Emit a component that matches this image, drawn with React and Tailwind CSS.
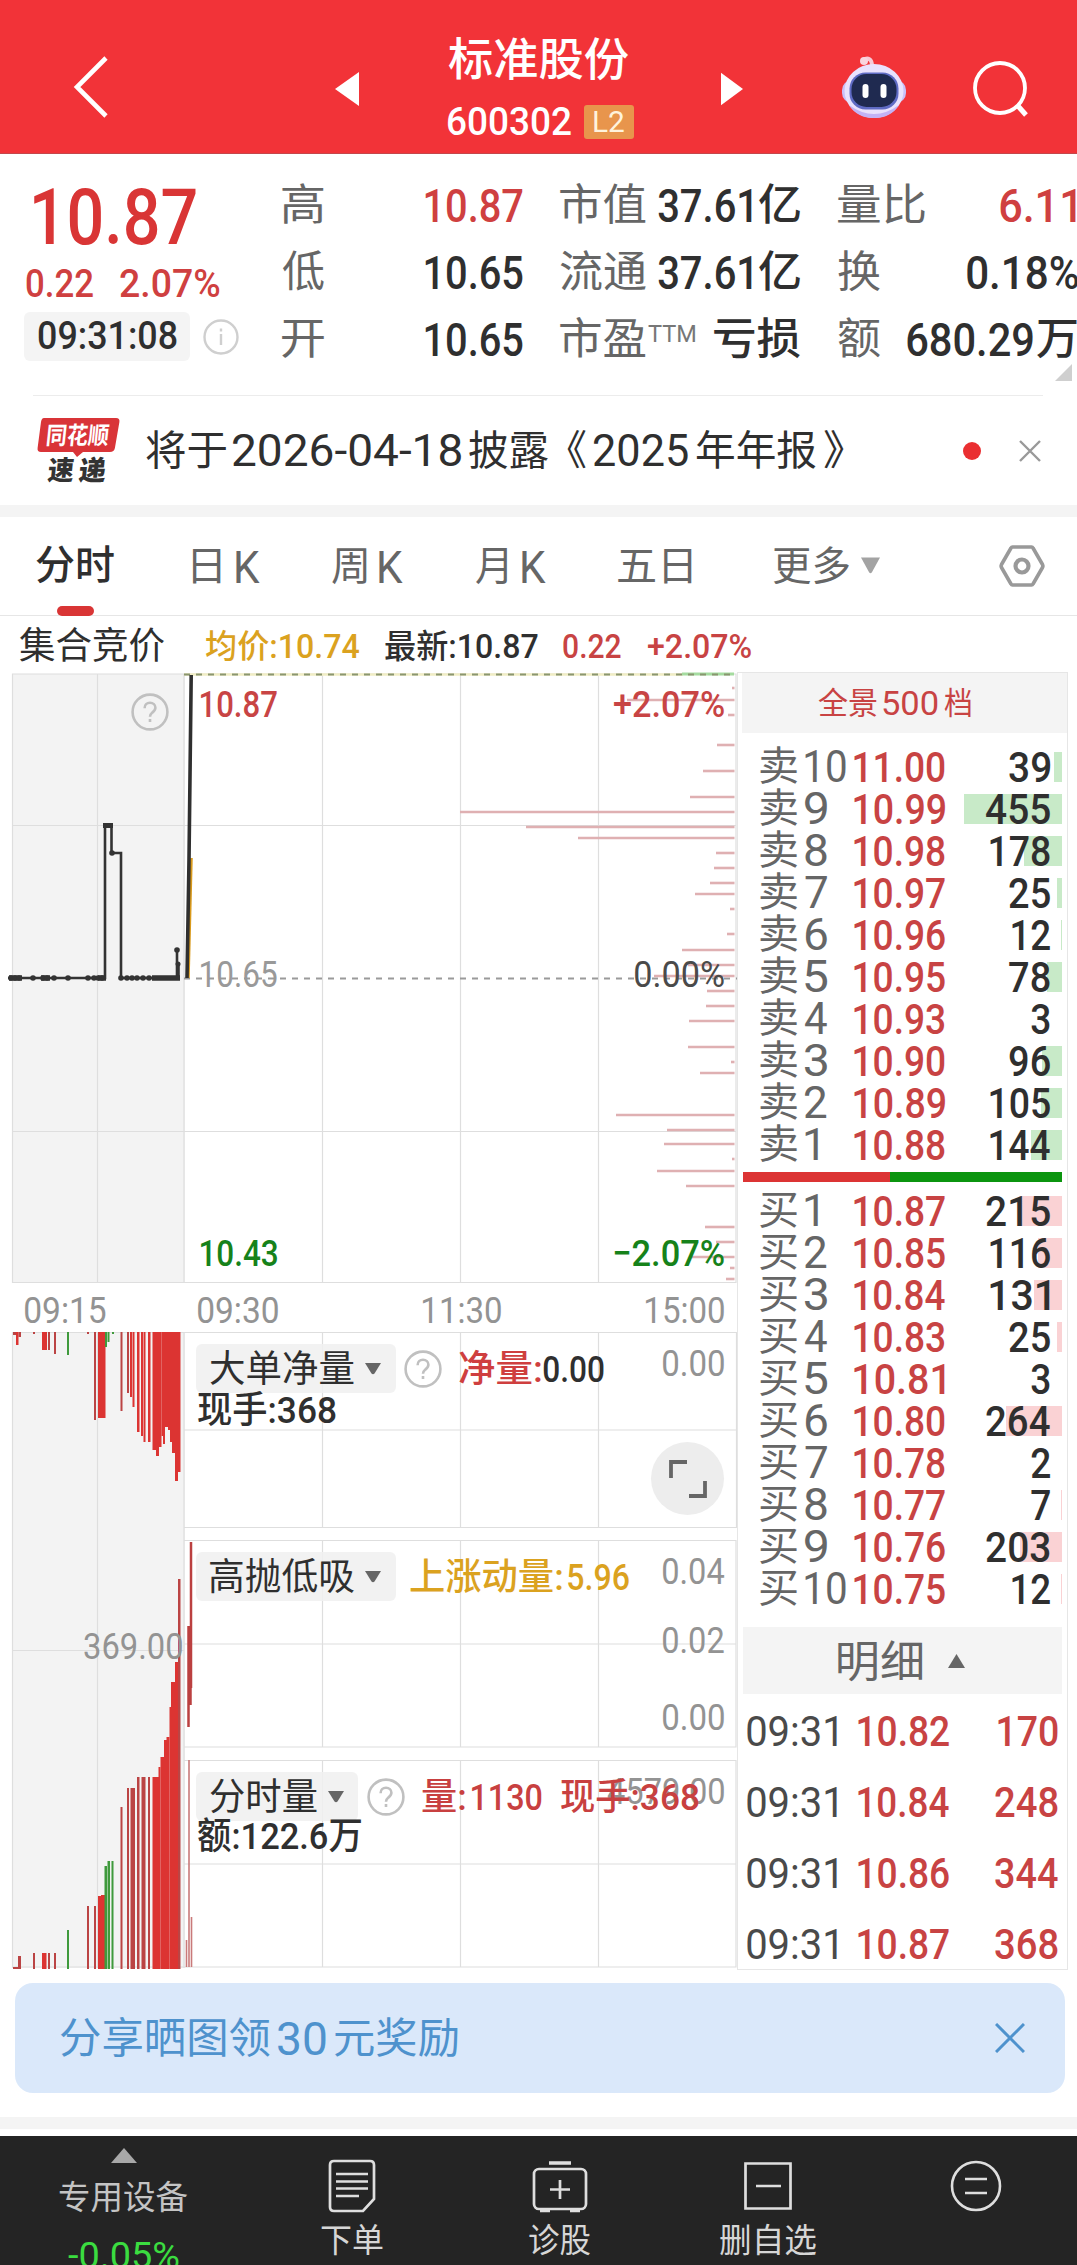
import { useLayoutEffect, useRef } from "react";
import clsx from "clsx";

// A single line of text whose visible glyphs span exactly the width of its box.
function Fit({ children, className }) {
  const inner = useRef(null);
  useLayoutEffect(() => {
    const el = inner.current;
    const ctx = document.createElement("canvas").getContext("2d");
    const cs = getComputedStyle(el);
    ctx.font = `${cs.fontWeight} ${cs.fontSize} ${cs.fontFamily}`;
    const m = ctx.measureText(el.textContent);
    const ink = m.actualBoundingBoxLeft + m.actualBoundingBoxRight;
    const k = el.parentElement.clientWidth / ink;
    el.style.transform = `translateX(${m.actualBoundingBoxLeft * k}px) scaleX(${k})`;
  }, [children]);
  return (
    <div className={clsx("shrink-0 leading-none", className)}>
      <span ref={inner} className="inline-block origin-left whitespace-nowrap align-top">
        {children}
      </span>
    </div>
  );
}

function Help({ className }) {
  return (
    <svg viewBox="0 0 38 38" className={clsx("size-[38px] shrink-0", className)} fill="none" stroke="#c0c0c0" strokeWidth="2.600">
      <circle cx="19" cy="19" r="17.4" />
      <path d="M13.6 15.2c0-3.2 2.3-5.4 5.4-5.4s5.4 2.1 5.4 5c0 2.6-1.6 3.7-3.3 5-1.5 1.2-2.1 2-2.1 4" />
      <path d="M19 26v3" />
    </svg>
  );
}

function Down() {
  return (
    <svg viewBox="0 0 16 12" className="h-[12px] w-[16px] shrink-0" fill="#666">
      <path d="M0 0h16L9.5 10.5q-1.500 1.500-3 0z" />
    </svg>
  );
}

function Header() {
  return (
    <header className="flex h-[154px] items-start border-b border-[#c4474b] bg-[#f23338]">
      <svg viewBox="0 0 36 64" className="ml-[73px] mt-[55px] h-[64px] w-[36px]" fill="none" stroke="#fff" strokeWidth="4.600">
        <path d="M33 3L4 32l29 29" />
      </svg>
      <svg viewBox="0 0 24 34" className="ml-[226px] mt-[72px] h-[34px] w-[24px]" fill="#fff">
        <path d="M24 0v34L0 17z" />
      </svg>
      <div className="ml-[89px] flex w-[187px] flex-col pt-[38px]">
        <Fit className="w-[181px] text-[45px] font-medium text-white">标准股份</Fit>
        <div className="mt-[22px] flex h-[34px] items-center">
          <Fit className="w-[123px] text-[39px] font-medium text-white">600302</Fit>
          <div className="ml-[13px] flex h-[34px] w-[50px] items-center justify-center rounded-[3px] bg-[#e8954c]">
            <Fit className="w-[30px] text-[30px] text-[#fff3dc]">L2</Fit>
          </div>
        </div>
      </div>
      <svg viewBox="0 0 23 34" className="ml-[86px] mt-[72px] h-[34px] w-[22px]" fill="#fff">
        <path d="M0 0v34L23 17z" />
      </svg>
      <svg viewBox="0 0 66 64" className="ml-[98px] mt-[55px] h-[64px] w-[66px]">
        <path d="M22 5c5-3 9-1 9 6" fill="none" stroke="#f7c9d6" strokeWidth="4" strokeLinecap="round" />
        <circle cx="23" cy="6" r="4" fill="#f9d4dd" />
        <rect x="1" y="25" width="64" height="23" rx="10" fill="#c9c0fa" />
        <ellipse cx="33" cy="36" rx="29.500" ry="27" fill="#e9e2fd" />
        <path d="M8 50q25 18 50 0q-8 13-25 13T8 50z" fill="#c3b3f6" />
        <rect x="8.500" y="17.500" width="49" height="37" rx="16" fill="#5f6bc4" />
        <rect x="10.500" y="19" width="45" height="33" rx="15" fill="#1f2a50" />
        <rect x="21.500" y="29" width="6" height="14" rx="3" fill="#fff" />
        <rect x="39.500" y="29" width="6" height="14" rx="3" fill="#fff" />
      </svg>
      <svg viewBox="0 0 60 60" className="ml-[65px] mt-[58px] h-[60px] w-[60px]" fill="none" stroke="#fff" strokeWidth="3.800">
        <circle cx="28" cy="30" r="25" />
        <path d="M46 48l8 9" strokeWidth="5" />
      </svg>
    </header>
  );
}

function Quote() {
  return (
    <section className="flex h-[240px] items-start">
      <div className="ml-[24px] w-[258px]">
        <Fit className="ml-[10px] mt-[26px] w-[162px] text-[77px] font-medium text-[#d93535]">10.87</Fit>
        <div className="mt-[8px] flex">
          <Fit className="ml-[2px] w-[67px] text-[39px] font-medium text-[#cf4040]">0.22</Fit>
          <Fit className="ml-[27px] w-[99px] text-[39px] font-medium text-[#cf4040]">2.07%</Fit>
        </div>
        <div className="mt-[8px] flex items-center">
          <div className="flex h-[49px] w-[166px] items-center justify-center rounded-[6px] bg-[#f4f4f4]">
            <Fit className="w-[139px] text-[39px] font-medium text-[#2f2f2f]">09:31:08</Fit>
          </div>
          <svg viewBox="0 0 36 36" className="ml-[13px] size-[36px]" fill="none" stroke="#cfcfcf" strokeWidth="2.400">
            <circle cx="18" cy="18" r="16.500" />
            <path d="M18 15v11M18 9.500v3" />
          </svg>
        </div>
      </div>
      <div className="mt-[18px] flex w-[278px] flex-col">
        <div className="flex h-[67px] items-center">
          <Fit className="w-[42px] text-[43px] text-[#666]">高</Fit>
          <Fit className="ml-[101px] w-[98px] text-[46px] font-medium text-[#cf4040]">10.87</Fit>
        </div>
        <div className="flex h-[67px] items-center">
          <Fit className="w-[42px] text-[43px] text-[#666]">低</Fit>
          <Fit className="ml-[101px] w-[98px] text-[46px] font-medium text-[#2f2f2f]">10.65</Fit>
        </div>
        <div className="flex h-[67px] items-center">
          <Fit className="w-[42px] text-[43px] text-[#666]">开</Fit>
          <Fit className="ml-[101px] w-[98px] text-[46px] font-medium text-[#2f2f2f]">10.65</Fit>
        </div>
      </div>
      <div className="mt-[18px] flex w-[278px] flex-col">
        <div className="flex h-[67px] items-center">
          <Fit className="w-[86px] text-[43px] text-[#666]">市值</Fit>
          <Fit className="ml-[12px] w-[94px] text-[46px] font-medium text-[#2f2f2f]">37.61</Fit>
          <Fit className="ml-[7px] w-[41px] text-[43px] font-medium text-[#2f2f2f]">亿</Fit>
        </div>
        <div className="flex h-[67px] items-center">
          <Fit className="w-[86px] text-[43px] text-[#666]">流通</Fit>
          <Fit className="ml-[12px] w-[94px] text-[46px] font-medium text-[#2f2f2f]">37.61</Fit>
          <Fit className="ml-[7px] w-[41px] text-[43px] font-medium text-[#2f2f2f]">亿</Fit>
        </div>
        <div className="flex h-[67px] items-center">
          <Fit className="w-[86px] text-[43px] text-[#666]">市盈</Fit>
          <Fit className="mb-[12px] ml-[2px] w-[47px] text-[24px] text-[#777]">TTM</Fit>
          <Fit className="ml-[19px] w-[86px] text-[43px] font-medium text-[#2f2f2f]">亏损</Fit>
        </div>
      </div>
      <div className="mt-[18px] flex w-[239px] flex-col">
        <div className="flex h-[67px] items-center">
          <Fit className="w-[87px] text-[43px] text-[#666]">量比</Fit>
          <Fit className="ml-[75px] w-[76px] text-[46px] font-medium text-[#cf4040]">6.11</Fit>
        </div>
        <div className="flex h-[67px] items-center">
          <Fit className="w-[42px] text-[43px] text-[#666]">换</Fit>
          <Fit className="ml-[87px] w-[111px] text-[46px] font-medium text-[#2f2f2f]">0.18%</Fit>
        </div>
        <div className="flex h-[67px] items-center">
          <Fit className="w-[42px] text-[43px] text-[#666]">额</Fit>
          <Fit className="ml-[27px] w-[126px] text-[46px] font-medium text-[#2f2f2f]">680.29</Fit>
          <Fit className="ml-[4px] w-[40px] text-[43px] font-medium text-[#2f2f2f]">万</Fit>
        </div>
        <svg viewBox="0 0 17 17" className="-mt-[9px] ml-[217px] size-[17px]" fill="#cfcfcf">
          <path d="M17 0v17H0z" />
        </svg>
      </div>
    </section>
  );
}

function News() {
  return (
    <section className="flex h-[111px] flex-col">
      <div className="ml-[33px] mt-[1px] h-px w-[1010px] shrink-0 bg-[#ececec]" />
      <div className="flex h-[109px] items-center">
        <div className="relative ml-[37px] h-[68px] w-[84px] shrink-0">
          <svg viewBox="0 0 84 68" className="absolute inset-0 size-full" fill="#d93438">
            <path d="M7 1h72q4 0 3.400 4l-4.500 26q-.7 4-5 4H46l-6 5-4-5H4q-4 0-3.400-4L4 5q.6-4 3-4z" />
          </svg>
          <div className="relative flex flex-col">
            <Fit className="ml-[10px] mt-[7px] w-[62px] -skew-x-6 text-[24px] font-bold text-white">同花顺</Fit>
            <div className="mt-[10px] flex -skew-x-6 gap-[5px] pl-[11px]">
              <Fit className="w-[26px] text-[27px] font-black text-[#333]">速</Fit>
              <Fit className="w-[27px] text-[27px] font-black text-[#333]">递</Fit>
            </div>
          </div>
        </div>
        <Fit className="ml-[25px] mt-[2px] w-[80px] text-[41px] text-[#2f2f2f]">将于</Fit>
        <Fit className="ml-[7px] w-[228px] text-[45px] text-[#2f2f2f]">2026-04-18</Fit>
        <Fit className="ml-[8px] mt-[2px] w-[79px] text-[41px] text-[#2f2f2f]">披露</Fit>
        <Fit className="ml-[19px] mt-[2px] w-[19px] text-[41px] text-[#2f2f2f]">《</Fit>
        <Fit className="ml-[8px] w-[94px] text-[45px] text-[#2f2f2f]">2025</Fit>
        <Fit className="ml-[8px] mt-[2px] w-[120px] text-[41px] text-[#2f2f2f]">年年报</Fit>
        <Fit className="ml-[8px] mt-[2px] w-[20px] text-[41px] text-[#2f2f2f]">》</Fit>
        <div className="ml-[119px] size-[18px] rounded-full bg-[#ea2f31]" />
        <svg viewBox="0 0 22 22" className="ml-[38px] size-[22px]" stroke="#999" strokeWidth="2.400">
          <path d="M1 1l20 20M21 1L1 21" />
        </svg>
      </div>
    </section>
  );
}

function Tabs() {
  return (
    <nav className="flex h-[99px] items-start border-b border-[#e6e6e6] text-[40px] text-[#666]">
      <div className="ml-[36px] flex w-[78px] flex-col items-center pt-[29px]">
        <Fit className="w-[78px] font-medium text-[#2f2f2f]">分时</Fit>
        <div className="mt-[20px] h-[10px] w-[37px] rounded-full bg-[#d93535]" />
      </div>
      <Fit className="ml-[79px] mt-[30px] w-[28px]">日</Fit>
      <Fit className="ml-[15px] mt-[29px] w-[24px] text-[44px]">K</Fit>
      <Fit className="ml-[72px] mt-[30px] w-[35px]">周</Fit>
      <Fit className="ml-[12px] mt-[29px] w-[24px] text-[44px]">K</Fit>
      <Fit className="ml-[73px] mt-[30px] w-[31px]">月</Fit>
      <Fit className="ml-[15px] mt-[29px] w-[24px] text-[44px]">K</Fit>
      <Fit className="ml-[72px] mt-[30px] w-[74px]">五日</Fit>
      <Fit className="ml-[81px] mt-[30px] w-[76px]">更多</Fit>
      <svg viewBox="0 0 20 18" className="ml-[12px] mt-[40px] h-[18px] w-[19px]" fill="#a3a3a3">
        <path d="M0 0h20L11.500 15.500q-1.500 2-3 0z" />
      </svg>
      <svg viewBox="0 0 46 44" className="ml-[119px] mt-[27px] h-[44px] w-[46px]" fill="none" stroke="#999" strokeWidth="3.600" strokeLinejoin="round">
        <path d="M13.500 3h19q1 0 1.500 1l9.500 16.500q.8 1.500 0 3L34 40q-.5 1-1.500 1h-19q-1 0-1.500-1L2.500 23.500q-.8-1.500 0-3L12 4q.5-1 1.500-1z" />
        <circle cx="23" cy="22" r="6.500" strokeWidth="4.200" />
      </svg>
    </nav>
  );
}

const DEPTH = [
  [688, 732], [700, 627], [715, 728], [745, 717], [771, 703], [797, 690], [812, 460], [827, 526], [838, 578],
  [853, 716], [868, 714], [883, 710], [894, 695], [909, 730], [934, 727], [950, 682], [965, 688], [976, 654],
  [991, 707], [1006, 706], [1021, 689], [1047, 688], [1062, 731], [1073, 700], [1115, 616], [1130, 667],
  [1144, 664], [1159, 732], [1171, 657], [1186, 686], [1227, 705], [1242, 716], [1257, 690], [1268, 730], [1279, 726],
];
// [left, width, end y, colour]
const R = "#dc3432";
const D = "#bb4444";
const G = "#3f9a3c";
const UPPER = [
  [13, 3, 1335, D], [16, 2.500, 1345, R], [18.500, 2.500, 1337, D], [33, 2, 1334, D], [42, 5, 1350, R], [48, 2, 1350, D],
  [54, 2, 1354, D], [67, 2, 1355, G], [87, 2, 1334, D], [94, 2, 1420, D], [98, 7.500, 1418, R], [105, 2, 1347, G],
  [107.500, 2, 1342, G], [112, 2, 1334, G], [120.500, 2, 1411, D], [127, 2, 1393, D], [130, 2, 1397, R],
  [132.500, 2, 1407, R], [137, 2.500, 1432, R], [141, 2, 1436, R], [143.500, 2, 1442, R], [148, 2.500, 1442, R],
  [152.500, 4, 1450, R], [156, 3, 1456, R], [159, 2.500, 1447, R], [161.500, 2, 1436, R], [163, 2, 1444, R],
  [165, 3, 1427, R], [168, 2.500, 1430, R], [170, 2, 1442, R], [172, 3, 1453, R], [175, 3, 1481, R], [178, 2.500, 1472, R],
];
const LOWER = [
  [13, 5, 1967, D], [18, 3, 1956, D], [33, 2, 1953, D], [42, 4.500, 1953, R], [48, 2, 1953, D], [54, 2, 1953, D],
  [67, 2, 1930, G], [87, 2, 1906, D], [94, 2, 1906, D], [98, 3, 1896, R], [101, 4, 1895, R], [104.500, 2.500, 1866, G],
  [107.500, 2.500, 1861, G], [111.500, 2, 1861, G], [120.500, 2, 1807, D], [127, 2, 1788, D], [130.500, 4.500, 1788, D],
  [137, 2.500, 1777, D], [141.500, 4, 1777, D], [148, 2, 1777, D], [152.500, 6.500, 1777, R], [158.500, 2, 1767, R],
  [160.500, 4, 1757, R], [164, 3, 1740, R], [166.500, 3, 1737, R], [169.500, 2, 1707, R], [171, 4, 1682, R],
  [175, 3, 1662, R], [178, 2.500, 1579, D],
];
const DOTS = [11, 15, 19, 33, 43, 47, 54, 68, 88, 94, 98, 102, 121, 127, 132, 137, 143, 149];

function ChartDrawing() {
  return (
    <svg viewBox="0 672 737 1298" className="block h-[1298px] w-[737px]" fill="none">
      <rect x="12" y="674" width="173" height="608" fill="#f3f3f3" />
      <rect x="12" y="1332" width="173" height="636" fill="#f3f3f3" />
      <path stroke="#dedede" strokeWidth="1.200" d="M12.500 674V1282.500H736V674zM97.500 674V1282M184 674V1282M322.500 674V1282M460.500 674V1282M598.500 674V1282M12 825.500H736M12 1131.500H736
        M12.500 1968V1332.500H736.500V1527.500H184M97.500 1332V1968M184 1332V1968M184 1430H736M184 1540.500H736V1747H184M184 1644H736M184 1760.500H736V1967H12M184 1864H736M12 1650.500H184
        M322.500 1332V1527M460.500 1332V1527M598.500 1332V1527M322.500 1540V1747M460.500 1540V1747M598.500 1540V1747M322.500 1760V1967M460.500 1760V1967M598.500 1760V1967" />
      <path stroke="#f0edc4" strokeWidth="2.500" d="M184 674.500H683" />
      <path stroke="#a5dca0" strokeWidth="3" d="M682 674H734" />
      <path stroke="#8a9670" strokeWidth="2" strokeDasharray="6 6" d="M184 674.500H735" />
      <path stroke="#9a9a9a" strokeWidth="2" strokeDasharray="6 6" d="M184 978.500H737" />
      {DEPTH.map(([y, x]) => (
        <path key={y} stroke="#dfb0b2" strokeWidth="2.600" d={`M${x} ${y}H734.500`} />
      ))}
      <path stroke="#d99a1c" strokeWidth="2.500" d="M191.500 858L188.500 978" />
      <path stroke="#2f2f2f" strokeWidth="3.600" d="M191.200 675L189 860L187 978" />
      <path stroke="#333" strokeWidth="2.600" d="M8 978H105V825.500H111.500V853H121V978H180M177 978V950V978M178.500 978V964" />
      <path stroke="#333" strokeWidth="5.500" d="M9 978H22M41 978H50M98 978H106M152 978H180" />
      <path stroke="#333" strokeWidth="5" d="M103 825.500H113" />
      {DOTS.map((x) => (
        <circle key={x} cx={x} cy="978" r="2.800" fill="#333" />
      ))}
      <circle cx="177" cy="950" r="2.800" fill="#333" />
      <circle cx="178" cy="964" r="2.500" fill="#333" />
      <circle cx="112" cy="853" r="2.800" fill="#333" />
      {UPPER.map(([x, w, y, c]) => (
        <rect key={x} x={x} y="1332" width={w} height={y - 1332} fill={c} />
      ))}
      {LOWER.map(([x, w, y, c]) => (
        <rect key={x} x={x} y={y} width={w} height={1969 - y} fill={c} />
      ))}
      <path stroke="#bb4040" strokeWidth="2.500" d="M191 1542V1688M190.500 1680V1705M188.500 1626V1727" />
      <path stroke="#c97a7a" strokeWidth="1.600" d="M189 1760V1967M186.500 1940V1967M191.500 1917V1967" />
    </svg>
  );
}

function Overlay({ className, children }) {
  return <Fit className={clsx("absolute -translate-y-1/2", className)}>{children}</Fit>;
}

function Charts() {
  return (
    <div className="relative h-[1298px] w-[737px] shrink-0">
      <ChartDrawing />
      <Help className="absolute left-[131px] top-[21px]" />
      <Overlay className="left-[201px] top-[32px] w-[76px] text-[37px] font-medium text-[#c84444]">10.87</Overlay>
      <Overlay className="left-[614px] top-[32px] w-[110px] text-[37px] font-medium text-[#c84444]">+2.07%</Overlay>
      <Overlay className="left-[201px] top-[302px] w-[76px] text-[37px] text-[#999]">10.65</Overlay>
      <Overlay className="left-[635px] top-[302px] w-[89px] text-[37px] text-[#4a4a4a]">0.00%</Overlay>
      <Overlay className="left-[201px] top-[581px] w-[76px] text-[37px] font-medium text-[#16821a]">10.43</Overlay>
      <Overlay className="left-[614px] top-[581px] w-[110px] text-[37px] font-medium text-[#16821a]">−2.07%</Overlay>
      <Overlay className="left-[25px] top-[638px] w-[81px] text-[37px] text-[#939393]">09:15</Overlay>
      <Overlay className="left-[198px] top-[638px] w-[80px] text-[37px] text-[#939393]">09:30</Overlay>
      <Overlay className="left-[423px] top-[638px] w-[78px] text-[37px] text-[#939393]">11:30</Overlay>
      <Overlay className="left-[646px] top-[638px] w-[78px] text-[37px] text-[#939393]">15:00</Overlay>
      <Overlay className="left-[84px] top-[974px] w-[98px] text-[37px] text-[#939393]">369.00</Overlay>
      <Overlay className="left-[663px] top-[691px] w-[61px] text-[37px] text-[#939393]">0.00</Overlay>
      <Overlay className="left-[663px] top-[899px] w-[61px] text-[37px] text-[#939393]">0.04</Overlay>
      <Overlay className="left-[663px] top-[968px] w-[61px] text-[37px] text-[#939393]">0.02</Overlay>
      <Overlay className="left-[663px] top-[1045px] w-[61px] text-[37px] text-[#939393]">0.00</Overlay>
      <Overlay className="left-[607px] top-[1119px] w-[117px] text-[37px] text-[#939393]">4579.00</Overlay>

      <div className="absolute left-[196px] top-[672px] flex h-[49px] items-center">
        <div className="flex h-full w-[200px] items-center rounded-[6px] bg-[#f0f0f0e0] pl-[14px]">
          <Fit className="mr-[11px] mt-[2px] w-[144px] text-[37px] text-[#2f2f2f]">大单净量</Fit>
          <Down />
        </div>
        <Help className="ml-[8px]" />
        <Fit className="ml-[17px] mt-[2px] w-[82px] text-[37px] font-medium text-[#cf3f3f]">净量:</Fit>
        <Fit className="ml-[2px] mt-[2px] w-[61px] text-[37px] font-medium text-[#2f2f2f]">0.00</Fit>
      </div>
      <Overlay className="left-[198px] top-[738px] w-[138px] text-[37px] font-medium text-[#2f2f2f]">现手:368</Overlay>
      <div className="absolute left-[651px] top-[770px] flex size-[73px] items-center justify-center rounded-full bg-[#ededed]">
        <svg viewBox="0 0 40 40" className="size-[40px]" fill="none" stroke="#666" strokeWidth="3.800">
          <path d="M3 19V3h16M37 22v15H21" />
        </svg>
      </div>

      <div className="absolute left-[196px] top-[880px] flex h-[49px] items-center">
        <div className="flex h-full w-[200px] items-center rounded-[6px] bg-[#f0f0f0e0] pl-[14px]">
          <Fit className="mr-[11px] mt-[2px] w-[144px] text-[37px] text-[#2f2f2f]">高抛低吸</Fit>
          <Down />
        </div>
        <Fit className="ml-[14px] mt-[2px] w-[152px] text-[37px] font-medium text-[#dba21f]">上涨动量:</Fit>
        <Fit className="ml-[6px] mt-[2px] w-[61px] text-[37px] font-medium text-[#dba21f]">5.96</Fit>
      </div>

      <div className="absolute left-[196px] top-[1100px] flex h-[49px] items-center">
        <div className="flex h-full w-[162px] items-center rounded-[6px] bg-[#f0f0f0e0] pl-[14px]">
          <Fit className="mr-[11px] mt-[2px] w-[107px] text-[37px] text-[#2f2f2f]">分时量</Fit>
          <Down />
        </div>
        <Help className="ml-[9px]" />
        <Fit className="ml-[17px] mt-[2px] w-[43px] text-[37px] font-medium text-[#c84040]">量:</Fit>
        <Fit className="ml-[7px] mt-[2px] w-[70px] text-[37px] font-medium text-[#c84040]">1130</Fit>
        <Fit className="ml-[19px] mt-[2px] w-[138px] text-[37px] font-medium text-[#c84040]">现手:368</Fit>
      </div>
      <Overlay className="left-[198px] top-[1164px] w-[163px] text-[37px] font-medium text-[#2f2f2f]">额:122.6万</Overlay>
    </div>
  );
}

const SELLS = [
  ["10", "11.00", 39, 8], ["9", "10.99", 455, 98], ["8", "10.98", 178, 38], ["7", "10.97", 25, 5], ["6", "10.96", 12, 1.5],
  ["5", "10.95", 78, 15], ["4", "10.93", 3, 0], ["3", "10.90", 96, 20], ["2", "10.89", 105, 21], ["1", "10.88", 144, 31],
];
const BUYS = [
  ["1", "10.87", 215, 43], ["2", "10.85", 116, 24], ["3", "10.84", 131, 28], ["4", "10.83", 25, 5], ["5", "10.81", 3, 0],
  ["6", "10.80", 264, 56], ["7", "10.78", 2, 0], ["8", "10.77", 7, 1], ["9", "10.76", 203, 42], ["10", "10.75", 12, 1.5],
];
const TRADES = [["10.82", "170"], ["10.84", "248"], ["10.86", "344"], ["10.87", "368"]];

const VOLUME_WIDTH = { 1: "w-[19px]", 2: "w-[41px]", 3: "w-[64px]" };

function Level({ side, row: [n, price, vol, bar], tint }) {
  const digits = String(vol);
  const wide = digits === "12" ? "w-[38px]" : digits[0] === "1" ? "w-[60px]" : VOLUME_WIDTH[digits.length];
  return (
    <div className="relative flex h-[42px] items-center">
      <div className={clsx("absolute right-[5px] top-[6px] h-[30px]", tint)} style={{ width: bar }} />
      <Fit className="ml-[22px] w-[37px] text-[40px] text-[#666]">{side}</Fit>
      <Fit
        className={clsx(
          "ml-[8px] text-[44px] leading-[42px] text-[#666]",
          n === "10" ? "mr-[8px] w-[41px]" : n === "1" ? "mr-[36px] w-[13px]" : "mr-[27px] w-[22px]"
        )}
      >
        {n}
      </Fit>
      <Fit className="w-[91px] text-[43px] leading-[42px] font-medium text-[#c84343]">{price}</Fit>
      <Fit className={clsx("relative ml-auto mr-[17px] text-[43px] leading-[42px] font-medium text-[#2f2f2f]", wide)}>{digits}</Fit>
    </div>
  );
}

function OrderBook() {
  return (
    <div className="h-[1298px] w-[331px] shrink-0 border border-[#e6e6e6]">
      <div className="ml-[4px] flex h-[60px] items-center bg-[#f4f4f4] text-[#c84343]">
        <Fit className="ml-[76px] w-[59px] text-[31px]">全景</Fit>
        <Fit className="ml-[6px] w-[55px] text-[34px]">500</Fit>
        <Fit className="ml-[6px] w-[27px] text-[31px]">档</Fit>
      </div>
      <div className="pt-[13px]">
        {SELLS.map((r) => <Level key={r[0]} side="卖" row={r} tint="bg-[#c8eac8]" />)}
      </div>
      <div className="ml-[5px] mt-[6px] flex h-[10px] w-[319px]">
        <div className="w-[147px] bg-[#dc3434]" />
        <div className="flex-1 bg-[#0b950f]" />
      </div>
      <div className="pt-[8px]">
        {BUYS.map((r) => <Level key={r[0]} side="买" row={r} tint="bg-[#fad2d4]" />)}
      </div>
      <div className="ml-[5px] mt-[17px] flex h-[67px] w-[319px] items-center bg-[#f4f4f4]">
        <Fit className="ml-[95px] mt-[3px] w-[84px] text-[43px] text-[#666]">明细</Fit>
        <svg viewBox="0 0 17 14" className="ml-[26px] h-[14px] w-[17px]" fill="#666">
          <path d="M8.500 0L17 14H0z" />
        </svg>
      </div>
      <div className="pt-[2px]">
        {TRADES.map(([price, vol]) => (
          <div key={price} className="flex h-[71px] items-center">
            <Fit className="ml-[9px] w-[90px] text-[43px] text-[#4a4a4a]">09:31</Fit>
            <Fit className="ml-[21px] w-[91px] text-[43px] font-medium text-[#c84343]">{price}</Fit>
            <Fit className={clsx("ml-auto mr-[9px] text-[43px] font-medium text-[#c84343]", vol[0] === "1" ? "w-[60px]" : "w-[63px]")}>{vol}</Fit>
          </div>
        ))}
      </div>
    </div>
  );
}

function BottomBar() {
  return (
    <footer className="flex h-[129px] items-start overflow-hidden bg-[#242424] text-[33px] text-[#d6d6d6]">
      <div className="ml-[59px] flex w-[129px] flex-col items-center pt-[12px]">
        <svg viewBox="0 0 26 15" className="h-[15px] w-[26px]" fill="#a8a8a8">
          <path d="M13 0L26 15H0z" />
        </svg>
        <Fit className="mt-[18px] w-[129px] text-[#c4c4c4]">专用设备</Fit>
        <Fit className="mt-[23px] w-[111px] text-[37px] text-[#3bdc40]">-0.05%</Fit>
      </div>
      <div className="ml-[133px] flex w-[62px] flex-col items-center pt-[23px]">
        <svg viewBox="0 0 48 54" className="h-[54px] w-[48px]" fill="none" stroke="#dedede" strokeWidth="2.700">
          <path d="M6 2h36q4 0 4 4v34L35 52H6q-4 0-4-4V6q0-4 4-4zM8 15h32M8 22.500h32M8 29.500h32M8 37h23" />
        </svg>
        <Fit className="mt-[11px] w-[62px]">下单</Fit>
      </div>
      <div className="ml-[146px] flex w-[61px] flex-col items-center pt-[24px]">
        <svg viewBox="0 0 58 54" className="h-[54px] w-[58px]" fill="none" stroke="#dedede" strokeWidth="2.700">
          <rect x="3" y="9" width="52" height="40" rx="5" />
          <path d="M18 3h22M9 50.500h10M39 50.500h10" strokeWidth="3.500" />
          <path d="M29 20v19M19 29.500h20" />
        </svg>
        <Fit className="mt-[10px] w-[61px]">诊股</Fit>
      </div>
      <div className="ml-[130px] flex w-[96px] flex-col items-center pt-[26px]">
        <svg viewBox="0 0 48 48" className="h-[48px] w-[48px]" fill="none" stroke="#dedede" strokeWidth="2.700">
          <path d="M1.500 1.500h45v45h-45zM12 24h25" />
        </svg>
        <Fit className="mt-[14px] w-[96px]">删自选</Fit>
      </div>
      <svg viewBox="0 0 52 52" className="ml-[134px] mt-[24px] size-[52px]" fill="none" stroke="#dedede" strokeWidth="2.600">
        <circle cx="26" cy="26" r="24" />
        <path d="M15 19h22M15 33h22" />
      </svg>
    </footer>
  );
}

export default function App() {
  return (
    <div className="h-[2265px] w-[1077px] overflow-hidden bg-white font-['Roboto','Noto_Sans_CJK_SC',sans-serif]">
      <Header />
      <Quote />
      <News />
      <div className="h-[12px] bg-[#f4f4f4]" />
      <Tabs />
      <div className="flex h-[56px] items-center pt-[4px] text-[33px] font-medium">
        <Fit className="ml-[20px] mt-[1px] w-[144px] text-[37px] font-normal text-[#2f2f2f]">集合竞价</Fit>
        <Fit className="ml-[42px] w-[153px] text-[#dba21f]">均价:10.74</Fit>
        <Fit className="ml-[26px] w-[153px] text-[#2f2f2f]">最新:10.87</Fit>
        <Fit className="ml-[25px] w-[58px] text-[#c84343]">0.22</Fit>
        <Fit className="ml-[27px] w-[103px] text-[#c84343]">+2.07%</Fit>
      </div>
      <div className="flex">
        <Charts />
        <OrderBook />
      </div>
      <div className="ml-[15px] mt-[13px] flex h-[110px] w-[1050px] items-center rounded-[18px] bg-[#dae8fa] text-[#4e92cd]">
        <Fit className="ml-[45px] mt-[2px] w-[210px] text-[42px]">分享晒图领</Fit>
        <Fit className="ml-[8px] mt-[1px] w-[48px] text-[46px]">30</Fit>
        <Fit className="ml-[9px] mt-[2px] w-[123px] text-[42px]">元奖励</Fit>
        <svg viewBox="0 0 30 30" className="ml-auto mr-[40px] size-[30px]" stroke="#4e92cd" strokeWidth="3">
          <path d="M1 1l28 28M29 1L1 29" />
        </svg>
      </div>
      <div className="mb-[7px] mt-[24px] h-[12px] bg-[#f4f4f4]" />
      <BottomBar />
    </div>
  );
}
